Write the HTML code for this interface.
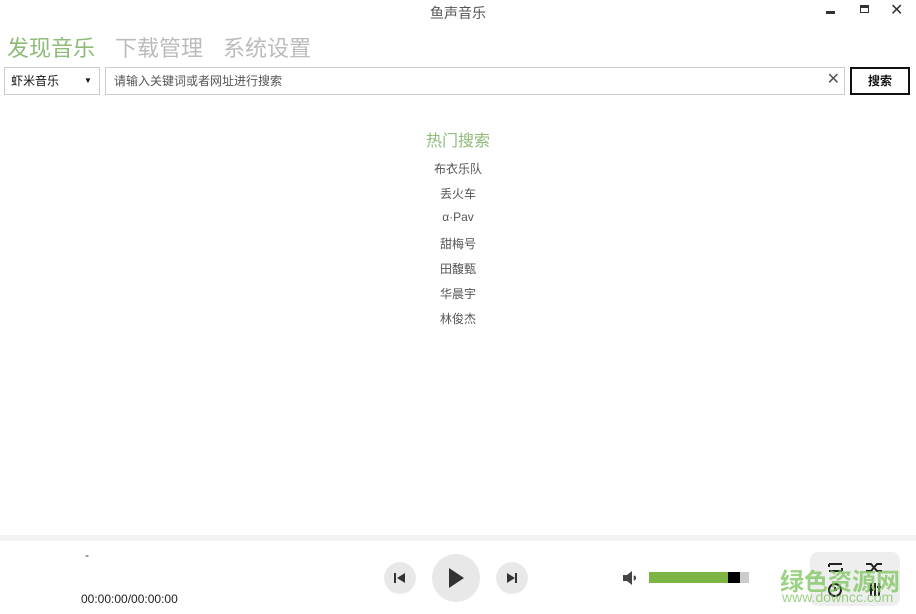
<!DOCTYPE html>
<html><head><meta charset="utf-8"><style>
*{margin:0;padding:0;box-sizing:border-box}
body{width:916px;height:614px;background:#fff;position:relative;overflow:hidden;font-family:"Liberation Sans","Noto Sans CJK SC",sans-serif;color:#333}
.abs{position:absolute}
.title{left:0;width:916px;top:3px;text-align:center;font-size:14px;color:#555}
.tab{top:31px;font-size:22px;color:#bbb}
.sel{left:4px;top:67px;width:96px;height:28px;border:1px solid #ccc;font-size:12px;line-height:26px;padding-left:6px;color:#111}
.inp{left:105px;top:67px;width:740px;height:28px;border:1px solid #ccc;font-size:12px;line-height:26px;padding-left:8px;color:#555}
.btn{left:850px;top:67px;width:60px;height:28px;border:2px solid #111;font-size:12px;line-height:24px;text-align:center;color:#111;font-weight:bold}
.hot{left:0;width:916px;text-align:center;font-size:12px;color:#555}
.circ{border-radius:50%;background:#e8e8e8}
</style></head><body>
<div class="abs title">鱼声音乐</div>
<div class="abs" style="left:826px;top:11px;width:9px;height:3px;background:#333"></div>
<div class="abs" style="left:860px;top:5px;width:9px;height:8px;border:1px solid #333;border-top:3px solid #333"></div>
<div class="abs" style="left:890px;top:0px;font-size:16px;color:#333">✕</div>
<div class="abs tab" style="left:7px;color:#8dbb78">发现音乐</div>
<div class="abs tab" style="left:115px">下载管理</div>
<div class="abs tab" style="left:223px">系统设置</div>
<div class="abs sel">虾米音乐<span style="position:absolute;left:79px;top:0;font-size:8px">▼</span></div>
<div class="abs inp">请输入关键词或者网址进行搜索<span style="position:absolute;right:4px;top:-1px;font-size:16px;color:#555">✕</span></div>
<div class="abs btn">搜索</div>
<div class="abs hot" style="top:127px;font-size:16px;color:#8dbb78">热门搜索</div>
<div class="abs hot" style="top:160px">布衣乐队</div>
<div class="abs hot" style="top:185px">丢火车</div>
<div class="abs hot" style="top:210px">α·Pav</div>
<div class="abs hot" style="top:235px">甜梅号</div>
<div class="abs hot" style="top:260px">田馥甄</div>
<div class="abs hot" style="top:285px">华晨宇</div>
<div class="abs hot" style="top:310px">林俊杰</div>
<div class="abs" style="left:0;top:535px;width:916px;height:6px;background:#f3f3f3"></div>
<div class="abs" style="left:85px;top:548px;font-size:12px">-</div>
<div class="abs" style="left:81px;top:592px;font-size:12px;color:#222">00:00:00/00:00:00</div>
<div class="abs circ" style="left:384px;top:562px;width:32px;height:32px"></div>
<svg class="abs" style="left:384px;top:562px" width="32" height="32"><rect x="10" y="11" width="2" height="10" fill="#333"/><path d="M21 11 L13 16 L21 21Z" fill="#333"/></svg>
<div class="abs circ" style="left:432px;top:554px;width:48px;height:48px"></div>
<svg class="abs" style="left:432px;top:554px" width="48" height="48"><path d="M17 14 L32 24 L17 34Z" fill="#333"/></svg>
<div class="abs circ" style="left:496px;top:562px;width:32px;height:32px"></div>
<svg class="abs" style="left:496px;top:562px" width="32" height="32"><path d="M11 11 L19 16 L11 21Z" fill="#333"/><rect x="19" y="11" width="2" height="10" fill="#333"/></svg>
<svg class="abs" style="left:620px;top:568px" width="20" height="20"><path d="M3 7 H7 L12 3 V17 L7 13 H3Z" fill="#444"/><path d="M14 8 Q16 10 14 12" stroke="#444" stroke-width="2" fill="none"/></svg>
<div class="abs" style="left:649px;top:572px;width:79px;height:11px;background:#7db544"></div>
<div class="abs" style="left:728px;top:572px;width:12px;height:11px;background:#000"></div>
<div class="abs" style="left:740px;top:572px;width:9px;height:11px;background:#ccc"></div>
<div class="abs" style="left:810px;top:552px;width:90px;height:54px;background:#eee;border-radius:8px"></div>
<svg class="abs" style="left:824px;top:558px" width="70" height="44" fill="none" stroke="#222" stroke-width="2"><path d="M5 6 H18 M5 13 H18 M5 6 V9 M18 10 V13"/><circle cx="11" cy="32" r="6"/><path d="M11 29 V32 H13"/><path d="M42 6 H47 L53 13 H58 M42 13 H47 L53 6 H58"/><path d="M47 25 V38 M51 25 V38 M55 25 V38 M45 32 H49 M53 29 H57"/></svg>
<div class="abs" style="left:780px;top:562px;font-size:24px;color:#7cc45a;opacity:.75;font-weight:bold">绿色资源网</div>
<div class="abs" style="left:782px;top:589px;font-size:14px;color:#7cc45a;opacity:.75">www.downcc.com</div>
</body></html>
